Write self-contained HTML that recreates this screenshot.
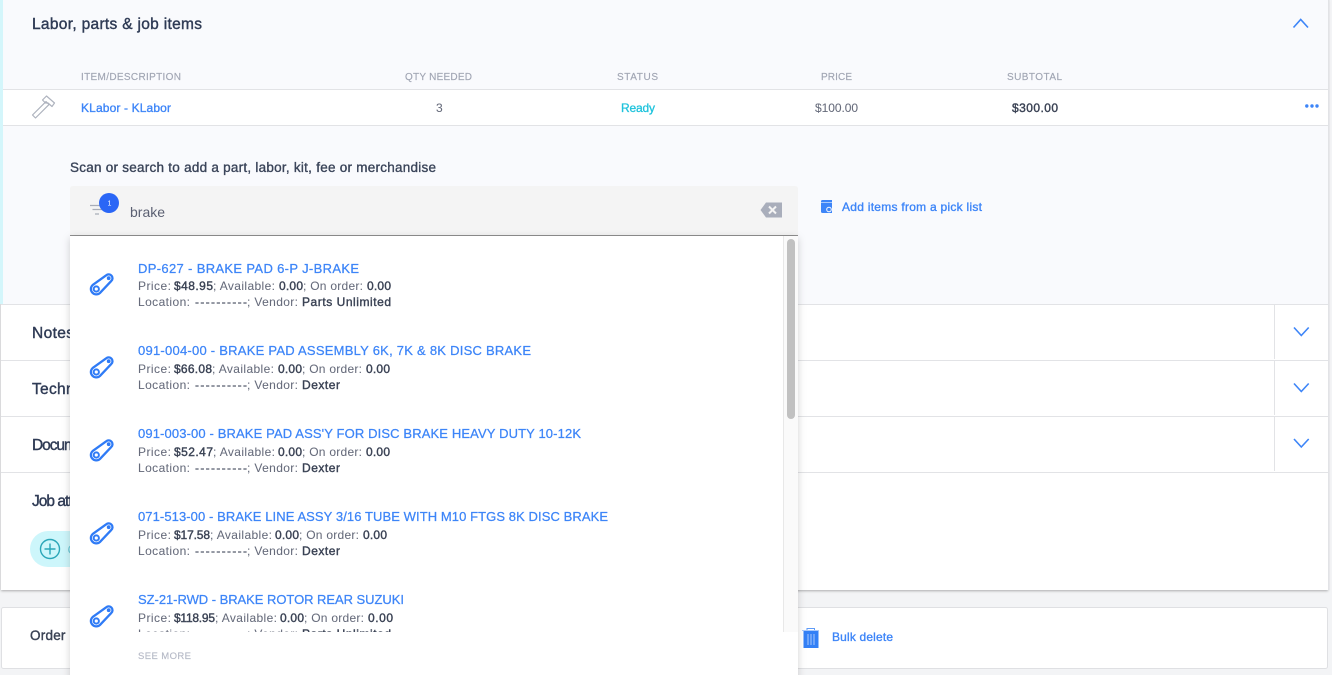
<!DOCTYPE html>
<html lang="en">
<head>
<meta charset="utf-8">
<title>Labor, parts &amp; job items</title>
<style>
html,body{margin:0;padding:0;width:1332px;height:675px;overflow:hidden;background:#f3f4f6}
svg{display:block;position:absolute;left:0;top:0}
text{font-family:"Liberation Sans",sans-serif;white-space:pre}
.h{font-size:15.5px;fill:#2f3b55;stroke:#2f3b55;stroke-width:.4px}
.th{font-size:10px;fill:#a0a5b3;stroke:#a0a5b3;stroke-width:.15px}
.lnk{font-size:12px;fill:#3d85f8;stroke:#3d85f8;stroke-width:.35px}
.cell{font-size:12px;fill:#666b7b;stroke:#666b7b;stroke-width:.05px}
.lab{font-size:13.5px;fill:#3a4459;stroke:#3a4459;stroke-width:.35px}
.t{font-size:13px;fill:#3d85f8;stroke:#3d85f8;stroke-width:.25px}
.m{font-size:12px;fill:#666b7b;stroke:#666b7b;stroke-width:.05px}
.b{font-size:12px;fill:#3a4254;stroke:#3a4254;stroke-width:.4px}
.d{font-size:12px;fill:#555b6c;stroke:#555b6c;stroke-width:.3px}
</style>
</head>
<body>
<svg width="1332" height="675" viewBox="0 0 1332 675" xmlns="http://www.w3.org/2000/svg">
<defs>
<filter id="s1" x="-5%" y="-5%" width="110%" height="110%"><feDropShadow dx="0" dy="1" stdDeviation="1.2" flood-color="#000" flood-opacity=".3"/></filter>
<filter id="s2" x="-5%" y="-5%" width="110%" height="110%"><feDropShadow dx="0" dy="2" stdDeviation="4" flood-color="#000" flood-opacity=".18"/></filter>
<g id="belt" fill="none" stroke="#2f7bf6">
<path d="M92.750 284.930 L106.200 275.330 A3.800 3.800 0 0 1 111.200 281.070 L99.850 293.070 A5.400 5.400 0 0 1 92.750 284.930 Z" stroke-width="2.300" stroke-linejoin="round"/>
<circle cx="96.300" cy="289" r="2.600" stroke-width="2"/>
<circle cx="108.700" cy="278.200" r="1.500" fill="#2f7bf6" stroke-width=".8"/>
</g>
</defs>

<rect width="1332" height="675" fill="#f3f4f6"/>

<!-- main card -->
<rect x="1" y="0" width="1327" height="590" fill="#fff" filter="url(#s1)"/>
<rect x="3" y="0" width="1325" height="304" fill="#f9fafd"/>
<rect x="0" y="0" width="3" height="304" fill="#d4f6fb"/>
<rect x="1328" y="0" width="1.500" height="590" fill="#e2e3e6"/>
<rect x="3" y="90" width="1325" height="35" fill="#fff"/>
<rect x="3" y="89" width="1325" height="1" fill="#e2e3e6"/>
<rect x="3" y="125" width="1325" height="1" fill="#e2e3e6"/>
<rect x="1" y="304" width="1327" height="1" fill="#e2e3e6"/>
<rect x="1" y="360" width="1327" height="1" fill="#e2e3e6"/>
<rect x="1" y="416" width="1327" height="1" fill="#e2e3e6"/>
<rect x="1" y="472" width="1327" height="1" fill="#e2e3e6"/>
<rect x="1274" y="305" width="1" height="54" fill="#e2e3e6"/>
<rect x="1274" y="361" width="1" height="54" fill="#e2e3e6"/>
<rect x="1274" y="417" width="1" height="54" fill="#e2e3e6"/>

<!-- header -->
<text class="h" x="32" y="29" textLength="170">Labor, parts &amp; job items</text>
<path d="M1293.500 27.500 L1300.700 19.500 L1308 27.500" fill="none" stroke="#3d85f8" stroke-width="1.600"/>

<!-- table head -->
<text class="th" x="81" y="80" textLength="100">ITEM/DESCRIPTION</text>
<text class="th" x="405" y="80" textLength="67">QTY NEEDED</text>
<text class="th" x="617" y="80" textLength="41">STATUS</text>
<text class="th" x="821" y="80" textLength="31">PRICE</text>
<text class="th" x="1007" y="80" textLength="55">SUBTOTAL</text>

<!-- table row -->
<g fill="none" stroke="#aeb3be" stroke-width="1.200" stroke-linejoin="round">
<path d="M32.500 115 L46 101.600 L49 104.600 L35.500 118 Z"/>
<path d="M42.500 100 L46.500 96 L54.500 103 L52 106.500 L48 103 L45.500 103 Z"/>
</g>
<text class="lnk" x="81" y="112" textLength="90">KLabor - KLabor</text>
<text class="cell" x="436" y="112" textLength="6">3</text>
<text class="cell" x="621" y="112" textLength="34" style="fill:#1fc3dc;stroke:#1fc3dc;stroke-width:.3px">Ready</text>
<text class="cell" x="815" y="112" textLength="43">$100.00</text>
<text class="b" x="1012" y="112" textLength="46">$300.00</text>
<circle cx="1306.800" cy="106" r="1.700" fill="#3d85f8"/>
<circle cx="1312" cy="106" r="1.700" fill="#3d85f8"/>
<circle cx="1317" cy="106" r="1.700" fill="#3d85f8"/>

<!-- label -->
<text class="lab" x="70" y="172" textLength="366">Scan or search to add a part, labor, kit, fee or merchandise</text>

<!-- pick list -->
<path d="M821 201.500 Q821 200 822.500 200 H832 V213 H822.500 Q821 213 821 211.500 Z" fill="#3d85f8"/>
<rect x="821" y="202" width="11" height="1" fill="#a9c9fb"/>
<circle cx="829" cy="209.500" r="2.300" fill="#3d85f8" stroke="#f9fafd" stroke-width="1"/>
<text class="lnk" x="842" y="211" textLength="140">Add items from a pick list</text>

<!-- collapsed sections -->
<text class="h" x="32" y="338" textLength="42">Notes</text>
<text class="h" x="32" y="394" textLength="76">Technician</text>
<text class="h" x="32" y="450" textLength="70">Documents</text>
<text class="h" x="32" y="506" textLength="100">Job attachments</text>
<path d="M1294 327.500 L1301.300 335.500 L1308.700 327.500" fill="none" stroke="#3d85f8" stroke-width="1.600"/>
<path d="M1294 383.500 L1301.300 391.500 L1308.700 383.500" fill="none" stroke="#3d85f8" stroke-width="1.600"/>
<path d="M1294 439 L1301.300 447 L1308.700 439" fill="none" stroke="#3d85f8" stroke-width="1.600"/>

<!-- add attachment pill -->
<rect x="30" y="531" width="80" height="36" rx="18" fill="#cdf6fb"/>
<circle cx="50" cy="549" r="9.500" fill="none" stroke="#2aa6b8" stroke-width="1.400"/>
<path d="M50 543.500 V554.500 M44.500 549 H55.500" stroke="#2aa6b8" stroke-width="1.400"/>
<text x="67.500" y="554" style="font-size:13px;fill:#6cc8d6">Cd</text>

<!-- bottom card -->
<rect x="1.500" y="607.500" width="1326" height="61" rx="2" fill="#fff" stroke="#dfe0e3"/>
<text class="b" x="30" y="640" style="font-size:13.500px" textLength="80">Order details</text>
<path d="M802 630.500 H819" stroke="#a9c9fb" stroke-width="1"/>
<path d="M807 630 V628.500 H814.500 V630" fill="none" stroke="#5f9bf8" stroke-width="1"/>
<rect x="803.500" y="631" width="15" height="17" fill="#3380f6"/>
<path d="M808 634 V645 M811 634 V645 M814 634 V645" stroke="#a9c9fb" stroke-width="1"/>
<text class="lnk" x="832" y="641" textLength="61">Bulk delete</text>

<!-- search input -->
<path d="M70 189 Q70 186 73 186 H795 Q798 186 798 189 V235 H70 Z" fill="#f4f4f4"/>
<rect x="70" y="235" width="728" height="1" fill="#8f8f8f"/>
<path d="M90 205.500 H104 M92.500 209.500 H102 M95 214 H99" stroke="#a8adb8" stroke-width="1.300"/>
<circle cx="109" cy="203" r="10" fill="#2a66f6"/>
<text x="107.500" y="205.500" style="font-size:7px;fill:#fff">1</text>
<text x="130" y="217" textLength="35" style="font-size:14px;fill:#5b6072">brake</text>
<path d="M760.500 210 L766 202.500 H782 V217.500 H766 Z" fill="#a9aebb"/>
<path d="M769 206.500 L776 213.500 M776 206.500 L769 213.500" stroke="#f4f4f4" stroke-width="2"/>

<!-- dropdown -->
<rect x="70" y="236" width="728" height="445" fill="#fff" filter="url(#s2)"/>
<rect x="783" y="236" width="15" height="396" fill="#fafafa"/>
<rect x="783" y="236" width="1" height="396" fill="#e8e8e8"/>
<rect x="787" y="239" width="8" height="180" rx="4" fill="#c1c1c1"/>

<!-- item 1 -->
<use href="#belt"/>
<text class="t" x="138" y="273" textLength="221">DP-627 - BRAKE PAD 6-P J-BRAKE</text>
<text class="m" x="138" y="290" textLength="33">Price:</text>
<text class="b" x="174" y="290" textLength="39">$48.95</text>
<text class="m" x="213" y="290" textLength="62">; Available:</text>
<text class="b" x="279" y="290" textLength="24">0.00</text>
<text class="m" x="303" y="290" textLength="60">; On order:</text>
<text class="b" x="367" y="290" textLength="24">0.00</text>
<text class="m" x="138" y="306" textLength="52">Location:</text>
<text class="d" x="195" y="306" textLength="52">----------</text>
<text class="m" x="247" y="306" textLength="51">; Vendor:</text>
<text class="b" x="302" y="306" textLength="89">Parts Unlimited</text>

<!-- item 2 -->
<use href="#belt" y="83"/>
<text class="t" x="138" y="355" textLength="393">091-004-00 - BRAKE PAD ASSEMBLY 6K, 7K &amp; 8K DISC BRAKE</text>
<text class="m" x="138" y="373" textLength="33">Price:</text>
<text class="b" x="174" y="373" textLength="38">$66.08</text>
<text class="m" x="212" y="373" textLength="62">; Available:</text>
<text class="b" x="278" y="373" textLength="24">0.00</text>
<text class="m" x="302" y="373" textLength="60">; On order:</text>
<text class="b" x="366" y="373" textLength="24">0.00</text>
<text class="m" x="138" y="389" textLength="52">Location:</text>
<text class="d" x="195" y="389" textLength="52">----------</text>
<text class="m" x="247" y="389" textLength="51">; Vendor:</text>
<text class="b" x="302" y="389" textLength="38">Dexter</text>

<!-- item 3 -->
<use href="#belt" y="166"/>
<text class="t" x="138" y="438" textLength="443">091-003-00 - BRAKE PAD ASS'Y FOR DISC BRAKE HEAVY DUTY 10-12K</text>
<text class="m" x="138" y="456" textLength="33">Price:</text>
<text class="b" x="174" y="456" textLength="39">$52.47</text>
<text class="m" x="213" y="456" textLength="62">; Available:</text>
<text class="b" x="278" y="456" textLength="24">0.00</text>
<text class="m" x="302" y="456" textLength="60">; On order:</text>
<text class="b" x="366" y="456" textLength="24">0.00</text>
<text class="m" x="138" y="472" textLength="52">Location:</text>
<text class="d" x="195" y="472" textLength="52">----------</text>
<text class="m" x="247" y="472" textLength="51">; Vendor:</text>
<text class="b" x="302" y="472" textLength="38">Dexter</text>

<!-- item 4 -->
<use href="#belt" y="249"/>
<text class="t" x="138" y="521" textLength="470">071-513-00 - BRAKE LINE ASSY 3/16 TUBE WITH M10 FTGS 8K DISC BRAKE</text>
<text class="m" x="138" y="539" textLength="33">Price:</text>
<text class="b" x="174" y="539" textLength="36">$17.58</text>
<text class="m" x="210" y="539" textLength="62">; Available:</text>
<text class="b" x="275" y="539" textLength="24">0.00</text>
<text class="m" x="299" y="539" textLength="60">; On order:</text>
<text class="b" x="363" y="539" textLength="24">0.00</text>
<text class="m" x="138" y="555" textLength="52">Location:</text>
<text class="d" x="195" y="555" textLength="52">----------</text>
<text class="m" x="247" y="555" textLength="51">; Vendor:</text>
<text class="b" x="302" y="555" textLength="38">Dexter</text>

<!-- item 5 -->
<use href="#belt" y="332"/>
<text class="t" x="138" y="604" textLength="266">SZ-21-RWD - BRAKE ROTOR REAR SUZUKI</text>
<text class="m" x="138" y="622" textLength="33">Price:</text>
<text class="b" x="174" y="622" textLength="41">$118.95</text>
<text class="m" x="215" y="622" textLength="62">; Available:</text>
<text class="b" x="280" y="622" textLength="24">0.00</text>
<text class="m" x="304" y="622" textLength="60">; On order:</text>
<text class="b" x="368" y="622" textLength="25">0.00</text>
<text class="m" x="138" y="638" textLength="52">Location:</text>
<text class="d" x="195" y="638" textLength="52">----------</text>
<text class="m" x="247" y="638" textLength="51">; Vendor:</text>
<text class="b" x="302" y="638" textLength="89">Parts Unlimited</text>

<!-- see more -->
<rect x="70" y="632" width="728" height="43" fill="#fff"/>
<text x="138" y="659" textLength="53" style="font-size:9.500px;fill:#b5b9c6;stroke:#b5b9c6;stroke-width:.15px">SEE MORE</text>
</svg>
</body>
</html>
